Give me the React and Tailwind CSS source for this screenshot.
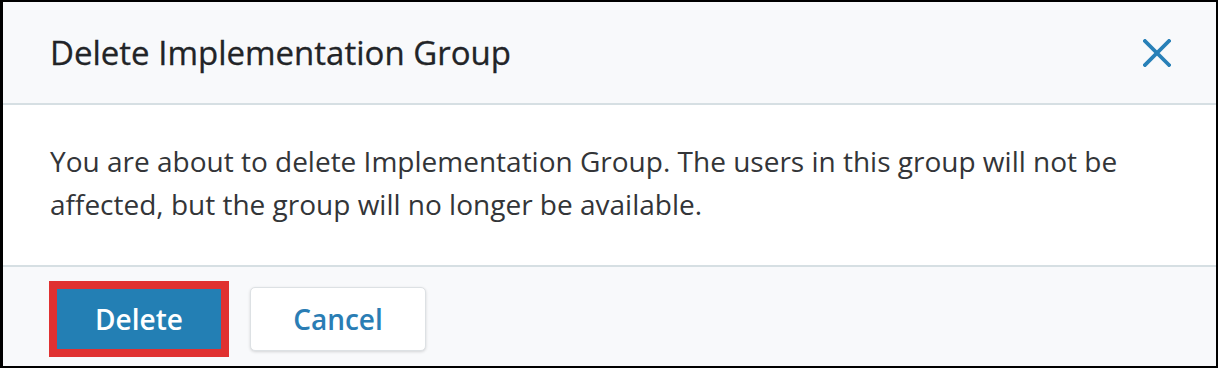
import React from "react";

const CloseIcon = () => (
  <svg width="28" height="28" viewBox="0 0 28 28" fill="none">
    <path d="M2 2 L26 26 M26 2 L2 26" stroke="#2880b8" strokeWidth="3.8" strokeLinecap="square" />
  </svg>
);

const App = () => {
  return (
    <div
      className="w-[1218px] h-[368px] bg-black pt-[2px] pb-[2px] pl-[3px] pr-[2px]"
      style={{ fontFamily: '"Open Sans", "Noto Sans", sans-serif' }}
    >
      <div className="w-full h-full flex flex-col bg-white">
        {/* header */}
        <div className="h-[103px] shrink-0 bg-[#f8f9fb] border-b-2 border-[#d6dfe3] flex items-center justify-between pl-[47px] pr-[45px]">
          <h2 className="text-[33px] font-normal text-[#222427] [-webkit-text-stroke:0.3px_#222427]">
            Delete Implementation Group
          </h2>
          <button aria-label="Close" className="flex items-center justify-center">
            <CloseIcon />
          </button>
        </div>

        {/* body */}
        <div className="h-[162px] shrink-0 border-b-2 border-[#d6dfe3] flex items-center pl-[47px] pr-[40px] pb-[4px]">
          <p className="text-[28px] leading-[43px] text-[#333538]">
            You are about to delete Implementation Group. The users in this group will not be
            affected, but the group will no longer be available.
          </p>
        </div>

        {/* footer */}
        <div className="flex-1 bg-[#f8f9fb] flex items-center gap-[21px] pl-[46px] pt-[5px]">
          <div className="border-8 border-[#e03131]">
            <button className="w-[164px] h-[60px] bg-[#237fb4] text-white text-[28px] font-semibold">
              Delete
            </button>
          </div>
          <button className="w-[176px] h-[64px] bg-white border border-[#dde1e4] rounded-[5px] shadow-[0_1px_3px_rgba(0,0,0,0.15)] text-[#2a7db4] text-[28px] font-semibold">
            Cancel
          </button>
        </div>
      </div>
    </div>
  );
};

export default App;
